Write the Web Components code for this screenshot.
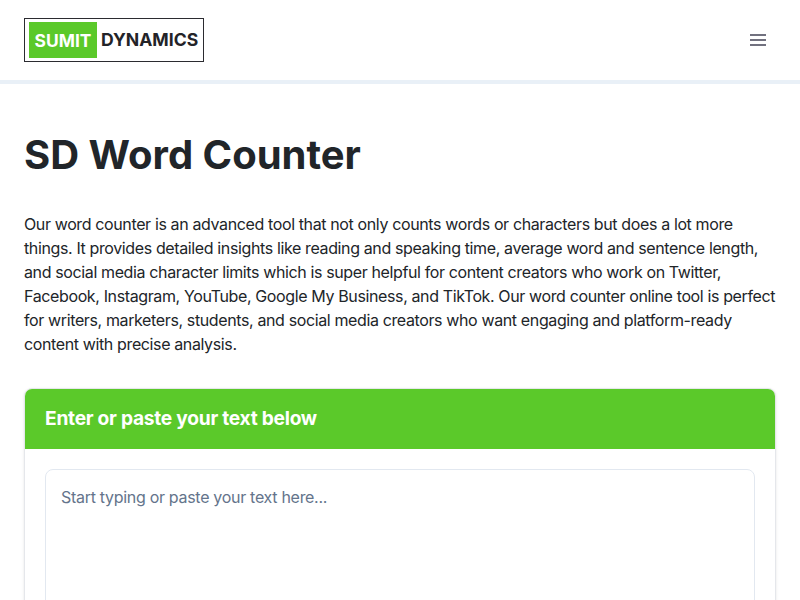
<!DOCTYPE html>
<html lang="en">
<head>
<meta charset="utf-8">
<title>SD Word Counter</title>
<style>
  html { overflow: hidden; }
  body { margin: 0; background: #fff; color: #212529; font-family: Inter, "Noto Sans", sans-serif; }
</style>
</head>
<body>
<site-header></site-header>
<main-content>
  <h1 slot="title">SD Word Counter</h1>
  <span slot="intro">Our word counter is an advanced tool that not only counts words or characters but does a lot more things. It provides detailed insights like reading and speaking time, average word and sentence length, and social media character limits which is super helpful for content creators who work on Twitter, Facebook, Instagram, YouTube, Google My Business, and TikTok. Our word counter online tool is perfect for writers, marketers, students, and social media creators who want engaging and platform-ready content with precise analysis.</span>
  <counter-card heading="Enter or paste your text below" placeholder="Start typing or paste your text here..."></counter-card>
</main-content>

<script>
class SiteHeader extends HTMLElement {
  constructor() {
    super();
    this.attachShadow({ mode: "open" });
    this.shadowRoot.innerHTML = `
      <style>
        :host {
          display: flex;
          justify-content: space-between;
          align-items: center;
          height: 80px;
          padding: 0 24px;
          background: #fff;
          border-bottom: 4px solid #e9f0f7;
        }
        .logo {
          display: flex;
          align-items: center;
          box-sizing: border-box;
          width: 180px;
          height: 44px;
          padding: 3px 4px;
          border: 1px solid #2b2b30;
          font-weight: 700;
          white-space: nowrap;
        }
        .logo b {
          display: flex;
          align-items: center;
          justify-content: center;
          width: 68px;
          height: 36px;
          margin-right: 4px;
          background: #5bc92a;
          color: #fff;
          font-size: 17.4px;
          font-weight: 700;
        }
        .logo span { color: #232328; font-size: 17.6px; margin-top: -1px; }
        button {
          display: flex;
          padding: 0 6px 0 0;
          border: 0;
          background: none;
        }
      </style>
      <div class="logo"><b>SUMIT</b><span>DYNAMICS</span></div>
      <button aria-label="Menu">
        <svg width="24" height="24" viewBox="0 0 24 24" fill="#71717f"><path d="M4 6h16v2H4zM4 11h16v2H4zM4 16h16v2H4z"/></svg>
      </button>
    `;
  }
}

class MainContent extends HTMLElement {
  constructor() {
    super();
    this.attachShadow({ mode: "open" });
    this.shadowRoot.innerHTML = `
      <style>
        :host {
          display: block;
          padding: 47px 24px 0;
        }
        ::slotted(h1) {
          margin: 0 0 33px;
          color: #212529;
          font-size: 40px;
          font-weight: 700;
          line-height: 48px;
        }
        p {
          margin: 0 0 32px;
          color: #212529;
          font-size: 16px;
          line-height: 24px;
          letter-spacing: -0.375px;
        }
      </style>
      <slot name="title"></slot>
      <p><slot name="intro"></slot></p>
      <slot></slot>
    `;
  }
}

class CounterCard extends HTMLElement {
  constructor() {
    super();
    this.attachShadow({ mode: "open" });
    this.shadowRoot.innerHTML = `
      <style>
        :host {
          display: block;
          border: 1px solid #e5e7eb;
          border-radius: 8px;
          box-shadow: 0 1px 3px rgba(0, 0, 0, 0.1);
          background: #fff;
          overflow: hidden;
        }
        .head {
          box-sizing: border-box;
          height: 60px;
          padding: 0 20px;
          background: #5bc92a;
          color: #fff;
          font-size: 19.2px;
          font-weight: 700;
          letter-spacing: -0.27px;
          line-height: 58px;
        }
        .body { padding: 20px; }
        .input {
          box-sizing: border-box;
          height: 250px;
          padding: 15px;
          border: 1px solid #e2e8f0;
          border-radius: 8px;
          color: #64748b;
          font-size: 16px;
          line-height: 24px;
          letter-spacing: -0.3px;
        }
      </style>
      <div class="head"></div>
      <div class="body"><div class="input" role="textbox"></div></div>
    `;
  }

  connectedCallback() {
    this.shadowRoot.querySelector(".head").textContent = this.getAttribute("heading");
    this.shadowRoot.querySelector(".input").textContent = this.getAttribute("placeholder");
  }
}

customElements.define("site-header", SiteHeader);
customElements.define("main-content", MainContent);
customElements.define("counter-card", CounterCard);
</script>
</body>
</html>
